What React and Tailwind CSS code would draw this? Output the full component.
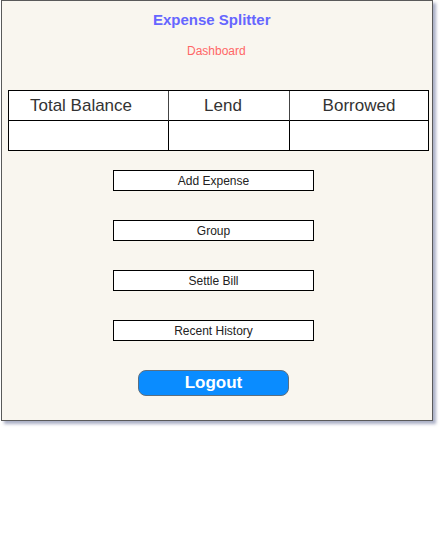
export default function App() {
  const buttons = ["Add Expense", "Group", "Settle Bill", "Recent History"];
  return (
    <div className="w-[443px] h-[551px] bg-white" style={{ fontFamily: '"Liberation Sans", Arial, sans-serif' }}>
      <div className="ml-[1px] w-[432px] h-[421px] bg-[#f9f6ef] border border-[#5a5a5a] shadow-[3px_3px_3px_rgba(100,110,150,0.55)] flex flex-col items-start">
        <div className="mt-[10px] ml-[151px] h-[18px] leading-[18px] text-[15px] font-bold text-[#6666ff]">Expense Splitter</div>
        <div className="mt-[15px] ml-[185px] h-[14px] leading-[14px] text-[12px] text-[#ff6666]">Dashboard</div>
        <div className="mt-[32px] ml-[6px] w-[421px] border border-black bg-white grid grid-cols-[160px_121px_1fr] text-[17px] text-[#333]">
          <div className="h-[30px] flex items-center justify-center pr-[15px] border-r border-[#444] border-b border-b-black">Total Balance</div>
          <div className="h-[30px] flex items-center justify-center pr-[12px] border-r border-[#444] border-b border-b-black">Lend</div>
          <div className="h-[30px] flex items-center justify-center border-b border-black">Borrowed</div>
          <div className="h-[29px] border-r border-black"></div>
          <div className="h-[29px] border-r border-black"></div>
          <div className="h-[29px]"></div>
        </div>
        <div className="mt-[19px] ml-[111px] flex flex-col gap-[29px]">
          {buttons.map((b) => (
            <div key={b} className="w-[201px] h-[21px] border border-black bg-white flex items-center justify-center text-[12px] text-[#222]">
              {b}
            </div>
          ))}
        </div>
        <div className="mt-[29px] ml-[136px] w-[151px] h-[26px] rounded-[8px] bg-[#0a8cff] border border-[#5c6f80] flex items-center justify-center text-white text-[17px] font-bold">
          Logout
        </div>
      </div>
    </div>
  );
}
